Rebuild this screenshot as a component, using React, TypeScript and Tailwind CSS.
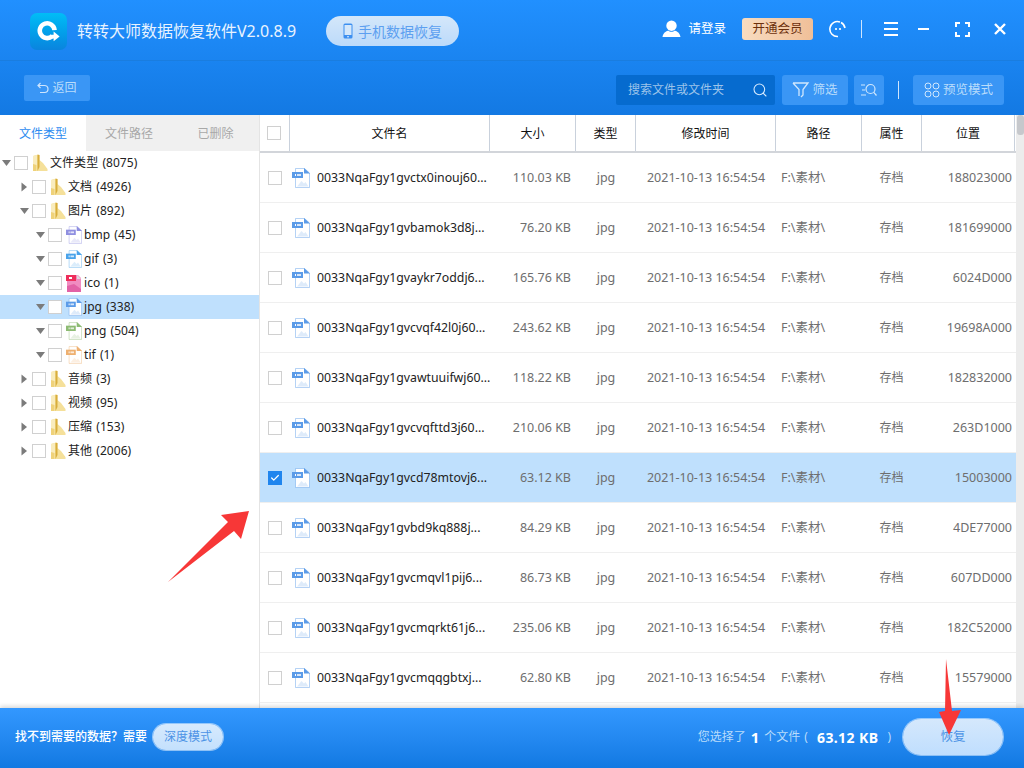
import { Check, Search } from 'lucide-react';

const fontCls = "font-['Noto_Sans','Noto_Sans_CJK_SC',sans-serif]";

const treeRows = [
  { label: '文件类型', count: '(8075)', level: 0, open: true, icon: 'folder' },
  { label: '文档', count: '(4926)', level: 1, open: false, icon: 'folder' },
  { label: '图片', count: '(892)', level: 1, open: true, icon: 'folder' },
  { label: 'bmp', count: '(45)', level: 2, open: true, icon: '#8f8fe0' },
  { label: 'gif', count: '(3)', level: 2, open: true, icon: '#4aa3ea' },
  { label: 'ico', count: '(1)', level: 2, open: true, icon: 'ico' },
  { label: 'jpg', count: '(338)', level: 2, open: true, icon: '#5b9be8', active: true },
  { label: 'png', count: '(504)', level: 2, open: true, icon: '#8dbb73' },
  { label: 'tif', count: '(1)', level: 2, open: true, icon: '#eeb070' },
  { label: '音频', count: '(3)', level: 1, open: false, icon: 'folder' },
  { label: '视频', count: '(95)', level: 1, open: false, icon: 'folder' },
  { label: '压缩', count: '(153)', level: 1, open: false, icon: 'folder' },
  { label: '其他', count: '(2006)', level: 1, open: false, icon: 'folder' },
];

const files = [
  ['0033NqaFgy1gvctx0inouj60...', '110.03 KB', '188023000'],
  ['0033NqaFgy1gvbamok3d8j...', '76.20 KB', '181699000'],
  ['0033NqaFgy1gvaykr7oddj6...', '165.76 KB', '6024D000'],
  ['0033NqaFgy1gvcvqf42l0j60...', '243.62 KB', '19698A000'],
  ['0033NqaFgy1gvawtuuifwj60...', '118.22 KB', '182832000'],
  ['0033NqaFgy1gvcvqfttd3j60...', '210.06 KB', '263D1000'],
  ['0033NqaFgy1gvcd78mtovj6...', '63.12 KB', '15003000'],
  ['0033NqaFgy1gvbd9kq888j...', '84.29 KB', '4DE77000'],
  ['0033NqaFgy1gvcmqvl1pij6...', '86.73 KB', '607DD000'],
  ['0033NqaFgy1gvcmqrkt61j6...', '235.06 KB', '182C52000'],
  ['0033NqaFgy1gvcmqqgbtxj...', '62.80 KB', '15579000'],
];

function Folder() {
  return (
    <svg width="16" height="18" viewBox="0 0 16 18" className="shrink-0">
      <path d="M1 2 L6 0.5 L7.5 1 L7.5 6 L11 9 L15.5 15 L15.5 17 L1 17 Z" fill="#f5e09a" />
      <path d="M1 2 L5 1 L5 17 L1 17 Z" fill="#f9ecbd" />
      <path d="M5.5 0.8 L7.5 1 L7.5 13 L5.5 17 Z" fill="#d8ad3c" />
      <path d="M1 17 L1 10 L4.5 11 L4.5 17 Z" fill="#efd27a" />
    </svg>
  );
}

function FileIcon({ color, w = 18, h = 20 }: { color: string; w?: number; h?: number }) {
  return (
    <svg width={w} height={h} viewBox="0 0 18 20" className="shrink-0">
      <path d="M3.5 0.5 H12.5 L17.5 5 V19.5 H3.5 Z" fill="#fff" stroke={color} strokeOpacity="0.45" strokeWidth="1" />
      <path d="M12 0 L18 5.5 H12 Z" fill={color} />
      <rect x="0" y="4" width="11" height="6" fill={color} />
      <rect x="3" y="6" width="1" height="2" fill="#fff" />
      <rect x="5" y="6" width="4" height="2" fill="#fff" opacity="0.75" />
      <path d="M5 18.5 L9.5 13 L12 15.5 L13.5 14 L16.5 18.5 Z" fill={color} fillOpacity="0.2" />
    </svg>
  );
}

function IcoIcon() {
  return (
    <svg width="16" height="17" viewBox="0 0 16 17" className="shrink-0">
      <path d="M1 0 H12 L15 3 V17 H1 Z" fill="#f08cc0" />
      <path d="M11 0 L15 4 H11 Z" fill="#ddd" />
      <rect x="0" y="0" width="10" height="6" fill="#ee2f5b" />
      <rect x="3" y="2" width="3" height="2" fill="#fff" />
      <path d="M1 17 L1 11 L8 9 L15 14 V17 Z" fill="#e262a6" />
    </svg>
  );
}

function Box() {
  return <span className="block h-[14px] w-[14px] shrink-0 border border-[#d0d0d0] bg-white" />;
}

function Caret({ open }: { open: boolean }) {
  return open ? (
    <svg width="12" height="12" viewBox="0 0 12 12" className="shrink-0"><path d="M1 3 H10 L5.5 9 Z" fill="#7b7b7b" /></svg>
  ) : (
    <svg width="12" height="12" viewBox="0 0 12 12" className="shrink-0"><path d="M2.5 1.5 L8 6 L2.5 10.5 Z" fill="#7b7b7b" /></svg>
  );
}

function TreeRow({ row }: { row: (typeof treeRows)[number] }) {
  const pad = row.level === 0 ? 'pl-[1px]' : row.level === 1 ? 'pl-[19px]' : 'pl-[35px]';
  return (
    <div className={`flex h-6 items-center ${pad} ${row.active ? 'bg-[#bfe0fd]' : ''}`}>
      <Caret open={row.open} />
      <span className="ml-[1px]"><Box /></span>
      <span className="ml-[3px] flex w-[17px] justify-center">
        {row.icon === 'folder' ? <Folder /> : row.icon === 'ico' ? <IcoIcon /> : <FileIcon color={row.icon} w={16} h={18} />}
      </span>
      <span className="ml-[2px] whitespace-nowrap text-[12px] tracking-[0.05px] text-[#222]">{row.label} <span className="ml-[1px]">{row.count}</span></span>
    </div>
  );
}

function HeadCell({ w, children }: { w: string; children: string }) {
  return (
    <div className={`${w} flex h-full items-center justify-center border-r border-[#c9d1dc] pt-px text-[12px] text-[#111]`}>{children}</div>
  );
}

function ToolBtn({ className, children }: { className: string; children: React.ReactNode }) {
  return <div className={`flex h-[30px] items-center justify-center rounded-[3px] bg-[#3a96f5] text-[12.5px] text-[#b9dcfb] ${className}`}>{children}</div>;
}

export default function App() {
  return (
    <div className={`relative flex h-screen w-[1024px] flex-col overflow-hidden bg-white ${fontCls}`}>
      {/* 顶部 */}
      <div className="h-[115px] shrink-0 bg-gradient-to-b from-[#2190ff] to-[#1379e3]">
        <div className="flex h-[61px] items-center border-b border-[#1a7ddf] pl-[30px] pr-[18px] pt-[2px]">
          <div className="flex h-[37px] w-[37px] items-center justify-center rounded-[7px] bg-gradient-to-b from-[#02bdf6] to-[#0a84de]">
            <svg width="24" height="24" viewBox="0 0 26 26">
              <path d="M16.5 18.5 A8 8 0 1 1 19 12" fill="none" stroke="#fff" strokeWidth="5" />
              <path d="M14 17 H18 V13.5 L24.5 19 L18 24 V21 H14 Z" fill="#fff" />
            </svg>
          </div>
          <div className="ml-[10px] whitespace-nowrap text-[16px] text-[#e8f3ff]">转转大师数据恢复软件V2.0.8.9</div>
          <div className="ml-[30px] flex h-[30px] w-[133px] items-center justify-center rounded-full bg-gradient-to-b from-[#d4e7fa] to-[#bcdafa] text-[14px] text-[#5c9ff0]">
            <svg width="10" height="16" viewBox="0 0 10 16" className="mr-[5px]">
              <rect x="0.5" y="0.5" width="9" height="15" rx="1.5" fill="#3d8ff0" />
              <rect x="1.5" y="2" width="7" height="10" fill="#d4e7fa" />
              <circle cx="5" cy="13.8" r="0.8" fill="#fff" />
            </svg>
            手机数据恢复
          </div>
          <div className="-mt-[4px] ml-auto flex items-center">
            <svg width="19" height="18" viewBox="0 0 20 19">
              <circle cx="10" cy="6" r="5.5" fill="#fff" />
              <path d="M0.5 18 C1 13.5 4 12 6.5 11 C8 13 12 13 13.5 11 C16 12 19 13.5 19.5 18 Z" fill="#fff" />
            </svg>
            <span className="ml-[7px] text-[12.5px] text-white">请登录</span>
            <div className="ml-[16px] flex h-[22px] w-[71px] items-center justify-center rounded-[3px] bg-gradient-to-r from-[#f8dcc0] to-[#f0bf98] text-[12.5px] text-[#6b2f0c]">开通会员</div>
            <svg width="18" height="18" viewBox="0 0 18 18" className="ml-[16px]">
              <path d="M11 2 A7.5 7.5 0 1 0 9 16.5" fill="none" stroke="#fff" strokeWidth="1.6" />
              <path d="M12 2.5 A7.5 7.5 0 0 1 16 8" fill="none" stroke="#fff" strokeWidth="1.6" />
              <circle cx="7" cy="9" r="1.1" fill="#fff" /><circle cx="11" cy="9" r="1.1" fill="#fff" />
            </svg>
            <span className="ml-[14px] h-[18px] w-px bg-[#cfe5fd]" />
            <div className="ml-[22px] flex w-[14px] flex-col gap-[4px]">
              <span className="h-[2px] bg-white" /><span className="h-[2px] bg-white" /><span className="h-[2px] bg-white" />
            </div>
            <span className="ml-[20px] h-[2px] w-[11px] bg-white" />
            <svg width="15" height="15" viewBox="0 0 15 15" className="ml-[26px]">
              <path d="M1 5 V1 H5 M10 1 H14 V5 M14 10 V14 H10 M5 14 H1 V10" fill="none" stroke="#fff" strokeWidth="2" />
            </svg>
            <svg width="12" height="12" viewBox="0 0 12 12" className="ml-[24px]">
              <path d="M1 1 L11 11 M11 1 L1 11" stroke="#fff" strokeWidth="2.4" />
            </svg>
          </div>
        </div>
        <div className="flex h-[54px] items-start pl-[24px] pr-[20px] pt-[14px]">
          <div className="flex h-[26px] w-[66px] items-center justify-center rounded-[2px] bg-[#3a96f5] text-[12px] text-[#b9dcfb]">
            <svg width="12" height="12" viewBox="0 0 12 12" className="mr-[3px]">
              <path d="M3.5 1 L1 3.5 L3.5 6 M1 3.5 H7.5 A3.5 3.5 0 0 1 7.5 10.5 H3" fill="none" stroke="#cfe5fd" strokeWidth="1.2" />
            </svg>
            返回
          </div>
          <div className="ml-auto flex h-[30px] w-[159px] items-center justify-between rounded-[2px] bg-[#066bcf] pl-[12px] pr-[7px] text-[12px] text-[#9cc3ea]">
            搜索文件或文件夹
            <Search size={16} color="#d7ebff" strokeWidth={1.6} />
          </div>
          <ToolBtn className="ml-[7px] w-[66px]">
            <svg width="18" height="16" viewBox="0 0 18 16" className="mr-[2px]">
              <path d="M1 1 H16 L11 7.5 V13 L9 15 M7 14 V7.5 L1 1" fill="none" stroke="#d0e7fd" strokeWidth="1.3" />
            </svg>
            筛选
          </ToolBtn>
          <ToolBtn className="ml-[6px] w-[30px]">
            <svg width="16" height="14" viewBox="0 0 16 14">
              <path d="M0 2 H4 M1 7 H4 M0 12 H5" stroke="#d0e7fd" strokeWidth="1.1" />
              <circle cx="9.5" cy="6" r="4.5" fill="none" stroke="#d0e7fd" strokeWidth="1.2" />
              <path d="M12.8 9.3 L15.5 12.5" stroke="#d0e7fd" strokeWidth="1.2" />
            </svg>
          </ToolBtn>
          <span className="ml-[14px] mt-[6px] h-[18px] w-px bg-[#cfe5fd]" />
          <ToolBtn className="ml-[14px] w-[91px]">
            <svg width="16" height="16" viewBox="0 0 16 16" className="mr-[3px]">
              <g fill="none" stroke="#d0e7fd" strokeWidth="1">
                <rect x="1" y="1" width="6" height="6" rx="3" /><rect x="9" y="1" width="6" height="6" rx="3" />
                <rect x="1" y="9" width="6" height="6" rx="3" /><rect x="9" y="9" width="6" height="6" rx="3" />
              </g>
            </svg>
            预览模式
          </ToolBtn>
        </div>
      </div>

      {/* 主体 */}
      <div className="flex min-h-0 flex-1">
        <div className="w-[260px] shrink-0 border-r border-[#e4e4e4]">
          <div className="flex h-[36px] text-[12px]">
            <div className="flex w-[86px] items-center justify-center pt-px text-[#2d8cf0]">文件类型</div>
            <div className="flex w-[86px] items-center justify-center bg-[#f0f0f0] pt-px text-[#a8a8a8]">文件路径</div>
            <div className="flex flex-1 items-center justify-center bg-[#f0f0f0] pt-px text-[#a8a8a8]">已删除</div>
          </div>
          {treeRows.map((row) => (
            <TreeRow key={row.label} row={row} />
          ))}
        </div>
        <div className="flex min-w-0 flex-1">
          <div className="min-w-0 flex-1">
            <div className="flex h-[38px] items-stretch border-b-2 border-[#d2d5da]">
              <div className="flex w-[30px] items-center justify-center border-r border-[#c9d1dc] pr-px"><Box /></div>
              <HeadCell w="w-[200px]">文件名</HeadCell>
              <HeadCell w="w-[86px]">大小</HeadCell>
              <HeadCell w="w-[60px]">类型</HeadCell>
              <HeadCell w="w-[140px]">修改时间</HeadCell>
              <HeadCell w="w-[86px]">路径</HeadCell>
              <HeadCell w="w-[60px]">属性</HeadCell>
              <HeadCell w="w-[93px]">位置</HeadCell>
            </div>
            {files.map((f, i) => {
              const sel = i === 6;
              return (
                <div key={f[0]} className={`flex h-[50px] items-center border-b border-[#efefef] text-[12.5px] text-[#6e6e6e] ${sel ? 'bg-[#bfe0fd]' : ''}`}>
                  <div className="flex w-[30px] shrink-0 justify-center pr-px">
                    {sel ? (
                      <span className="flex h-[14px] w-[14px] items-center justify-center bg-[#1f85ee]"><Check size={10} color="#fff" strokeWidth={3} /></span>
                    ) : (
                      <Box />
                    )}
                  </div>
                  <div className="flex w-[200px] shrink-0 items-center pl-[2px] text-[#222]">
                    <FileIcon color="#5b9be8" />
                    <span className="ml-[7px] whitespace-nowrap pt-px text-[12.3px]">{f[0]}</span>
                  </div>
                  <div className="w-[86px] shrink-0 pr-[5px] pt-px text-right">{f[1]}</div>
                  <div className="w-[60px] shrink-0 pt-px text-center">jpg</div>
                  <div className="w-[140px] shrink-0 pt-px text-center">2021-10-13 16:54:54</div>
                  <div className="w-[86px] shrink-0 pl-[5px] pt-px">F:\素材\</div>
                  <div className="w-[60px] shrink-0 pr-px pt-px text-center text-[12px]">存档</div>
                  <div className="w-[93px] shrink-0 pr-[3px] pt-px text-right">{f[2]}</div>
                </div>
              );
            })}
          </div>
          <div className="w-[8px] shrink-0 bg-[#ececec]">
            <div className="ml-[1px] h-[20px] w-[7px] rounded-[3px] bg-[#c6c8cc]" />
          </div>
        </div>
      </div>

      {/* 底部 */}
      <div className="z-10 flex h-[60px] shrink-0 items-center bg-gradient-to-b from-[#3398ff] to-[#1179e2] pb-[2px] pl-[15px] pr-[21px] shadow-[0_-2px_4px_rgba(0,0,0,0.15)]">
        <span className="whitespace-nowrap text-[12px] font-medium text-white">找不到需要的数据？需要</span>
        <div className="ml-[6px] flex h-[26px] w-[70px] items-center justify-center rounded-full bg-gradient-to-b from-[#d7eafd] to-[#c3e0fd] text-[12px] text-[#4c93e6] shadow-[0_0_0_1px_rgba(255,255,255,0.5)]">深度模式</div>
        <div className="ml-auto flex items-center whitespace-nowrap text-[12px] text-[#b9dcfb]">
          您选择了
          <span className="ml-[5px] mr-[5px] text-[15px] font-bold text-white">1</span>
          个文件
          <span className="ml-[4px]">(</span>
          <span className="ml-[9px] text-[14px] font-bold tracking-[0.4px] text-white">63.12 KB</span>
          <span className="ml-[9px]">)</span>
        </div>
        <div className="ml-[12px] flex h-[36px] w-[100px] items-center justify-center rounded-full bg-gradient-to-b from-[#d5e8fc] to-[#bfdefe] text-[12.5px] text-[#4c93e6] shadow-[0_0_0_1px_rgba(255,255,255,0.5)]">恢复</div>
      </div>

      {/* 红色箭头标注 */}
      <svg width="1024" height="768" viewBox="0 0 1024 768" className="pointer-events-none absolute left-0 top-0 z-20">
        <path d="M168 582 L228 522 L221 515 L249 511 L241 539 L234 531 Z" fill="#f73737" />
        <path d="M946 659 L952 711 L961 710 L949 735 L939 712 L945 711 Z" fill="#f73737" />
      </svg>
    </div>
  );
}
